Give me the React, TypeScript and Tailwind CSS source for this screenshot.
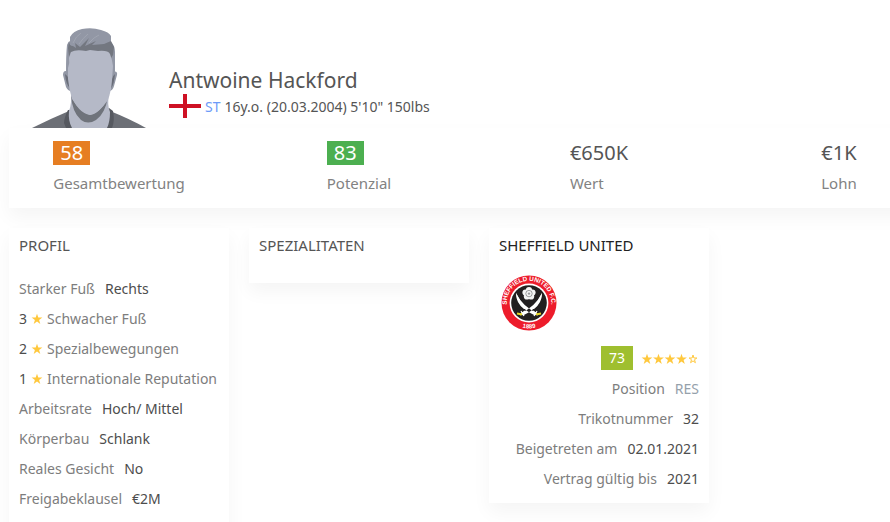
import type { ReactNode } from "react";

const card = "bg-white shadow-[0_9px_18px_rgba(0,0,0,0.045)]";

function Avatar() {
  return (
    <svg viewBox="0 0 120 104" className="h-[104px] w-[120px] shrink-0" role="img" aria-label="Antwoine Hackford">
      <path d="M4 104Q22 95 41 87L82 87Q102 95 118 104Z" fill="#6c6f76" />
      <path d="M40 86Q36 94 36 99L38 104H84Q87 97 85 87L81 84Z" fill="#565960" />
      <path d="M43 66Q44 80 41 87Q40 97 44 104H79Q82 98 82 88Q79 82 81 66Z" fill="#b5b9c7" />
      <path d="M43 71Q44 88 53 96Q60 101 68 96Q77 90 80 73Q72 90 62 91Q50 89 43 71Z" fill="#6f737b" />
      <path d="M41 48Q35 45 35 51L38 63Q40 67 43 67ZM84 48Q90 46 89 51L86 62Q85 66 82 67Z" fill="#9297a5" />
      <path d="M37 50Q42 53 42 64Q38 61 37 50ZM87 50Q83 53 83 64Q86 61 87 50Z" fill="#696d78" />
      <path d="M38 49Q38 30 39 21Q40 18 42 17L42 13Q45 7 54 5Q64 3 73 6Q81 8 83 12L83 18Q87 22 87 28L87 49L83 53H41Z" fill="#9297a5" />
      <path d="M41 17Q41 22 45 22L48 24L47 19L52 23L61 14L57 22L68 17L64 21L76 20L83 17L86 23L85 31L83 34L80 28L43 28L41 33L40 24Z" fill="#737780" />
      <path d="M43 28Q48 25 58 27L62 26L70 27Q80 26 82 30Q84 35 85 42L84 56Q83 68 80 76Q71 89 62 91Q52 88 44 75Q41 65 40 55L40 44Q42 39 41 34Z" fill="#b5b9c7" />
      <path d="M45 19Q48 12 53 9M51 20Q55 14 60 10M61 19Q66 13 71 11" fill="none" stroke="#a0a5b1" strokeWidth="1" />
    </svg>
  );
}

function Flag() {
  return (
    <svg viewBox="0 0 32 24" className="h-6 w-8 shrink-0" role="img" aria-label="England">
      <path d="M0 0H32V24H0Z" fill="#fff" />
      <path d="M14 0H18V10H32V14H18V24H14V14H0V10H14Z" fill="#ce1124" />
    </svg>
  );
}

function Crest() {
  return (
    <svg viewBox="0 0 60 60" className="block size-[60px]" role="img" aria-label="Sheffield United">
      <defs>
        <path id="crest-top" d="M8.5 36A22.3 22.3 0 1 1 51.5 36" />
        <path id="crest-bottom" d="M15 50.4A25.3 25.3 0 0 0 45 50.4" />
      </defs>
      <circle cx="30" cy="30" r="27.5" fill="#ed1c2b" />
      <circle cx="30" cy="30" r="19.4" fill="#fff" />
      <circle cx="30" cy="30" r="17.8" fill="#221f20" />
      <g fill="#fff" fontFamily="Liberation Sans, sans-serif" fontWeight="700">
        <text textAnchor="middle" fontSize="6.3">
          <textPath href="#crest-top" startOffset="50%">SHEFFIELD UNITED F.C.</textPath>
        </text>
        <text textAnchor="middle" fontSize="6">
          <textPath href="#crest-bottom" startOffset="50%">1889</textPath>
        </text>
      </g>
      <g fill="#f4f4f4">
        <circle cx="30" cy="17" r="3.1" />
        <circle cx="26.5" cy="19.5" r="3.1" />
        <circle cx="33.5" cy="19.5" r="3.1" />
        <circle cx="27.9" cy="23.4" r="3.1" />
        <circle cx="32.1" cy="23.4" r="3.1" />
      </g>
      <circle cx="30" cy="20.6" r="3.2" fill="none" stroke="#77777a" strokeWidth=".7" />
      <circle cx="30" cy="20.6" r="1.2" fill="#99999c" />
      <path d="M17 20Q18 34 36 42.500L38 40Q24 34 17 20ZM43 20Q42 34 24 42.500L22 40Q36 34 43 20Z" fill="#fff" />
      <path d="M17 20Q17 30 25 36L29 36Q22 31 17 20ZM43 20Q43 30 35 36L31 36Q38 31 43 20Z" fill="#fff" />
      <path d="M34 38L39 42M35 43L38 38M26 38L21 42M25 43L22 38" stroke="#fff" strokeWidth="1.2" />
      <path d="M18 40.500L23 41.500M42 40.500L37 41.500" stroke="#e8d829" strokeWidth="2" />
    </svg>
  );
}

const starPath = "M6 .8L7.300 4.600H11.400L8.100 7L9.300 11L6 8.600L2.700 11L3.900 7L.6 4.600H4.700Z";

function SingleStar() {
  return (
    <svg viewBox="0 0 12 12" className="mt-[2px] size-3 shrink-0" aria-hidden="true">
      <path d={starPath} fill="#ffc83d" />
    </svg>
  );
}

function FourStars() {
  return (
    <svg viewBox="0 0 58 12" className="mt-[2px] h-3 w-[58px] shrink-0" role="img" aria-label="4 / 5">
      {[0, 11.5, 23, 34.5].map((x) => (
        <path key={x} d={starPath} fill="#ffc83d" transform={`translate(${x} 0)`} />
      ))}
      <path
        d="M6 2L6.900 5H9.900L7.500 6.700L8.400 9.700L6 7.900L3.600 9.700L4.500 6.700L2.100 5H5.100Z"
        fill="#fff"
        stroke="#ffc83d"
        strokeWidth="1"
        transform="translate(46 0)"
      />
    </svg>
  );
}

function Stat({ label, children }: { label: string; children: ReactNode }) {
  return (
    <div className="flex justify-center">
      <div>
        <div className="flex h-6 items-center text-[20px] text-[#555]">{children}</div>
        <div className="mt-2 text-[15px] leading-5 text-[#828282]">{label}</div>
      </div>
    </div>
  );
}

function Panel({ title, dark, children }: { title: string; dark?: boolean; children?: ReactNode }) {
  return (
    <section className={`${card} px-[10px] pt-[5px] pb-[10px]`}>
      <h2 className={`mb-4 text-[15px] leading-6 ${dark ? "text-[#222]" : "text-[#555]"}`}>{title}</h2>
      {children}
    </section>
  );
}

function Field({ label, value, muted }: { label: string; value: string; muted?: boolean }) {
  return (
    <li className="flex h-[30px] items-center gap-[10px] whitespace-nowrap">
      <span>{label}</span>
      <span className={muted ? "text-[#95a1ab]" : "text-[#4d4d4d]"}>{value}</span>
    </li>
  );
}

function Rating({ value, label }: { value: number; label: string }) {
  return (
    <li className="flex h-[30px] items-center gap-1 whitespace-nowrap">
      <span className="text-[#4d4d4d]">{value}</span>
      <SingleStar />
      <span>{label}</span>
    </li>
  );
}

export default function App() {
  return (
    <div className="h-screen overflow-hidden bg-white font-['Noto_Sans',sans-serif]">
      <main className="min-w-[950px] pr-px pl-[9px]">
        <header className="flex items-end gap-[21px] pt-6 pl-[19px]">
          <Avatar />
          <div className="pb-[10px]">
            <h1 className="text-[21px] leading-7 text-[#555]">Antwoine Hackford</h1>
            <div className="flex items-center gap-1 text-[14px] text-[#555]">
              <Flag />
              <a href="#st" className="text-[#6d9bf8]">ST</a>
              <span>16y.o. (20.03.2004) 5'10" 150lbs</span>
            </div>
          </div>
        </header>
        <section className={`${card} pt-[13px] pb-[15px]`}>
          <div className="-mx-[10px] grid grid-cols-4">
            <Stat label="Gesamtbewertung">
              <span className="bg-[#e67e22] px-[7px] leading-6 text-white">58</span>
            </Stat>
            <Stat label="Potenzial">
              <span className="bg-[#4caf50] px-[7px] leading-6 text-white">83</span>
            </Stat>
            <Stat label="Wert">€650K</Stat>
            <Stat label="Lohn">€1K</Stat>
          </div>
        </section>
        <div className="mt-5 grid grid-cols-4 items-start gap-5 text-[14px] text-[#7d7d7d]">
          <Panel title="PROFIL">
            <ul className="pb-10">
              <Field label="Starker Fuß" value="Rechts" />
              <Rating value={3} label="Schwacher Fuß" />
              <Rating value={2} label="Spezialbewegungen" />
              <Rating value={1} label="Internationale Reputation" />
              <Field label="Arbeitsrate" value="Hoch/ Mittel" />
              <Field label="Körperbau" value="Schlank" />
              <Field label="Reales Gesicht" value="No" />
              <Field label="Freigabeklausel" value="€2M" />
            </ul>
          </Panel>
          <Panel title="SPEZIALITATEN" />
          <Panel title="SHEFFIELD UNITED" dark>
            <Crest />
            <ul className="mt-[10px] flex flex-col items-end">
              <li className="flex h-[30px] items-center gap-2">
                <span className="bg-[#9fbf2f] px-2 leading-6 text-white">73</span>
                <FourStars />
              </li>
              <Field label="Position" value="RES" muted />
              <Field label="Trikotnummer" value="32" />
              <Field label="Beigetreten am" value="02.01.2021" />
              <Field label="Vertrag gültig bis" value="2021" />
            </ul>
          </Panel>
        </div>
      </main>
    </div>
  );
}
